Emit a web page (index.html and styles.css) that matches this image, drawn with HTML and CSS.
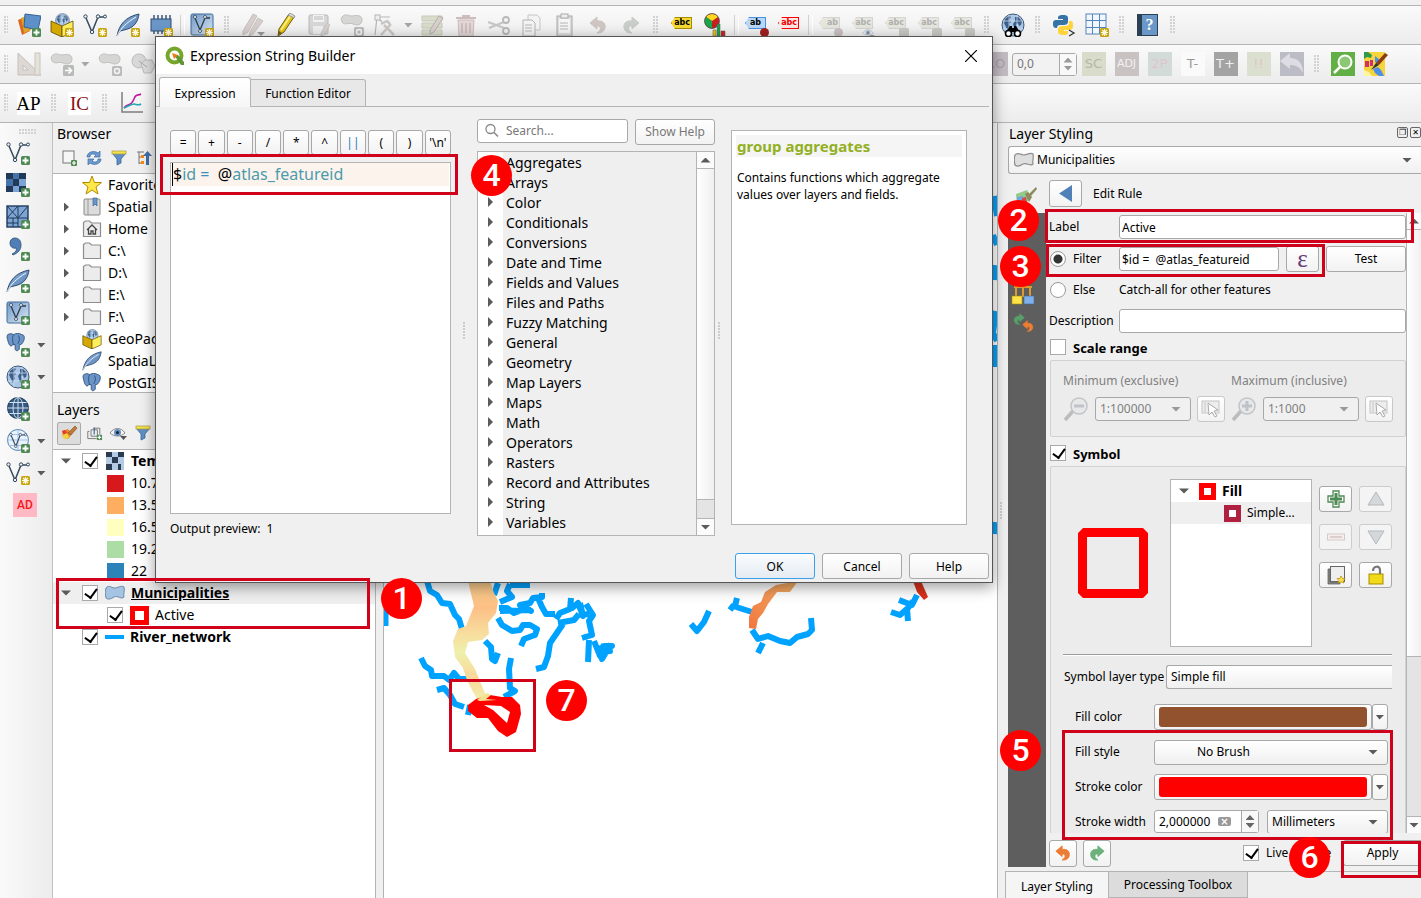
FILE: index.html
```html
<!DOCTYPE html>
<html lang="en">
<head>
<meta charset="utf-8">
<title>Expression String Builder</title>
<link rel="stylesheet" href="styles.css">
</head>
<body>
<svg class="defs" aria-hidden="true">
  <defs>
    <linearGradient id="gb" x1="0" y1="0" x2="1" y2="1"><stop offset="0" stop-color="#8fb1d8"/><stop offset="1" stop-color="#4f7db5"/></linearGradient>
    <linearGradient id="gv" x1="0" y1="0" x2="1" y2="1"><stop offset="0" stop-color="#6f97c6"/><stop offset="1" stop-color="#dce8f5"/></linearGradient>
    <linearGradient id="gt" x1="0" y1="0" x2="0" y2="1"><stop offset="0" stop-color="#fbd08d"/><stop offset=".22" stop-color="#fdbf85"/><stop offset=".45" stop-color="#f7dfa0"/><stop offset=".6" stop-color="#eef0ab"/><stop offset=".8" stop-color="#fbd79a"/><stop offset="1" stop-color="#f1efae"/></linearGradient>
    <linearGradient id="go" x1="1" y1="0" x2="0" y2="1"><stop offset="0" stop-color="#f3b068"/><stop offset="1" stop-color="#f0763f"/></linearGradient>
  </defs>
  <symbol id="plus" viewBox="0 0 9 9"><rect width="9" height="9" rx="1.5" fill="#4f8a55"/><path d="M4.500 1.500v6M1.500 4.500h6" stroke="#fff" stroke-width="1.800"/></symbol>
  <symbol id="star" viewBox="0 0 9 9"><rect width="9" height="9" rx="1.500" fill="#c9a412"/><path d="M4.500 1v7M1 4.500h7M2 2l5 5M7 2l-5 5" stroke="#fffbe0" stroke-width="1.200"/></symbol>
  <symbol id="vec" viewBox="0 0 24 24"><path d="M3 5L9 19L15 4H22" fill="none" stroke="#34495e" stroke-width="1.500"/><g fill="#eef2f6" stroke="#34495e"><circle cx="2.500" cy="3.500" r="1.700"/><circle cx="15" cy="3.500" r="1.700"/><circle cx="22" cy="3.500" r="1.500"/><circle cx="9" cy="19" r="1.700"/></g></symbol>
  <symbol id="vecp" viewBox="0 0 24 24"><use href="#vec"/><use href="#plus" x="15" y="15" width="9" height="9"/></symbol>
  <symbol id="vecs" viewBox="0 0 24 24"><use href="#vec"/><use href="#star" x="15" y="15" width="9" height="9"/></symbol>
  <symbol id="feather" viewBox="0 0 24 24"><path d="M1 23C3 12 9 4 23 1C22 8 19 15 8 17L4 18Z" fill="url(#gb)" stroke="#2f4d70"/><path d="M1 23C5 15 10 10 20 4" fill="none" stroke="#fff" stroke-width=".9"/></symbol>
  <symbol id="feathers" viewBox="0 0 24 24"><use href="#feather"/><use href="#star" x="15" y="15" width="9" height="9"/></symbol>
  <symbol id="featherp" viewBox="0 0 24 24"><use href="#feather"/><use href="#plus" x="15" y="15" width="9" height="9"/></symbol>
  <symbol id="dsm" viewBox="0 0 24 24"><path d="M1 7L10 3L13 18L5 22Z" fill="#e0641c"/><path d="M4 5L13 2L14 17L7 20Z" fill="#d9a62c"/><path d="M8 1L24 3L21 17L7 14Z" fill="#5d8fc9" stroke="#365f90"/><use href="#plus" x="15" y="15" width="9" height="9"/></symbol>
  <symbol id="globe" viewBox="0 0 24 24"><circle cx="12" cy="12" r="11" fill="#a9c6e6" stroke="#3e5876"/><path d="M4 6L8 3L10 4L8 7L10 9L8 11L9 13L7 18L5 14L3 10ZM14 4L17 4L21 8L20 12L18 13L17 10L15 12L16 14L14 18L13 14L12 11L14 8Z" fill="#3d5f88"/><path d="M2 8H22M2 16H22M8 2V22M16 2V22" stroke="#d4e3f3" stroke-width=".7"/></symbol>
  <symbol id="gpkg" viewBox="0 0 24 24"><use href="#globe" x="5" y="0" width="15" height="15"/><path d="M1 8L12 13V24L1 19Z" fill="#d4a800" stroke="#5a4a00" stroke-width=".8"/><path d="M12 13L23 8V19L12 24Z" fill="#ffee5c" stroke="#5a4a00" stroke-width=".8"/></symbol>
  <symbol id="gpkgs" viewBox="0 0 24 24"><use href="#gpkg"/><use href="#star" x="15" y="15" width="9" height="9"/></symbol>
  <symbol id="chip" viewBox="0 0 24 24"><path d="M5 2V7M9 2V7M13 2V7M17 2V7M21 2V7M5 17V21M9 17V21M13 17V21" stroke="#2f4d70" stroke-width="1.400"/><rect x="2" y="6" width="20" height="12" fill="#6a96c8" stroke="#2f4d70"/><use href="#star" x="15" y="15" width="9" height="9"/></symbol>
  <symbol id="vbox" viewBox="0 0 24 24"><rect x="1" y="1" width="22" height="21" rx="1.500" fill="url(#gv)" stroke="#3f6a9a"/><path d="M5 5L10 17L15 5H20" fill="none" stroke="#2c3e50" stroke-width="1.300"/><g fill="#fff" stroke="#2c3e50" stroke-width=".8"><circle cx="5" cy="4" r="1.500"/><circle cx="15" cy="4" r="1.500"/><circle cx="10" cy="18" r="1.500"/></g></symbol>
  <symbol id="vboxs" viewBox="0 0 24 24"><use href="#vbox"/><use href="#star" x="15" y="15" width="9" height="9"/></symbol>
  <symbol id="vboxp" viewBox="0 0 24 24"><use href="#vbox"/><use href="#plus" x="15" y="15" width="9" height="9"/></symbol>
  <symbol id="pencil" viewBox="0 0 24 24"><path d="M5 16L15 1L20 4L10 19L4 23Z" fill="#e8c81c" stroke="#6b5a14"/><path d="M7 17L17 2" stroke="#fff38c" stroke-width="1.500"/><path d="M14 2L16 0L21 3L20 5Z" fill="#ddd" stroke="#777" stroke-width=".7"/><path d="M4 23L5 18L8 20Z" fill="#7a5b1e"/></symbol>
  <symbol id="pencilg" viewBox="0 0 24 24"><path d="M2 18L12 1L16 3L7 19L2 22ZM9 19L17 5L22 8L12 21L8 23Z" fill="#d6cecc" stroke="#c6bfbd"/><path d="M16 19H24L20 23Z" fill="#999"/></symbol>
  <symbol id="save" viewBox="0 0 24 24"><rect x="2" y="2" width="19" height="19" rx="1.500" fill="#d6d6d6" stroke="#b8b8b8"/><rect x="6" y="2" width="11" height="7" fill="#f2f2f2"/><path d="M7 4H16M7 6H16" stroke="#bbb"/><rect x="6" y="13" width="10" height="8" fill="#eee"/><path d="M14 20L20 10L23 12L17 22L14 23Z" fill="#d9d0cc" stroke="#bbb" stroke-width=".6"/></symbol>
  <symbol id="blob" viewBox="0 0 24 24"><path d="M2 4C5 0 9 3 12 3C17 2 22 2 22 7C22 12 17 13 13 11C9 9 5 13 2 9C1 7 1 5 2 4Z" fill="#d6d7d5" stroke="#c0c1bf"/></symbol>
  <symbol id="blobs" viewBox="0 0 24 24"><use href="#blob"/><rect x="14" y="14" width="10" height="10" rx="1.500" fill="#bbb"/><circle cx="19" cy="19" r="2.500" fill="none" stroke="#f5f5f5" stroke-width="1.500"/></symbol>
  <symbol id="bloba" viewBox="0 0 24 24"><use href="#blob"/><rect x="13" y="13" width="11" height="11" rx="1.500" fill="#b8bbb8"/><path d="M15 18.500H21M18.500 15.500L21.500 18.500L18.500 21.500" fill="none" stroke="#fff" stroke-width="1.600"/></symbol>
  <symbol id="nodes" viewBox="0 0 24 24"><path d="M2 22L4 4H17M5 5L9 9" fill="none" stroke="#b5b5b5" stroke-width="1.200"/><rect x="2" y="2" width="5" height="5" fill="#eee" stroke="#b5b5b5"/><path d="M8 22L18 11M11 12L21 22M8 11L14 8L17 11" fill="none" stroke="#c9c6c4" stroke-width="2.500"/></symbol>
  <symbol id="table" viewBox="0 0 24 24"><path d="M1 3H21V8H1ZM1 10H21V15H1ZM1 17H21V22H1Z" fill="#d9dccb" stroke="#c6c9b6"/><path d="M9 17L18 3L22 5L13 19L9 21Z" fill="#d8d0cc" stroke="#b5aeaa"/></symbol>
  <symbol id="trash" viewBox="0 0 24 24"><path d="M4 7H20L19 23H5Z" fill="#e2d6d6" stroke="#ccbcbc"/><path d="M2 5H22M8 3H16M8 10V20M12 10V20M16 10V20" stroke="#ccbcbc" stroke-width="1.800"/></symbol>
  <symbol id="cut" viewBox="0 0 24 24"><path d="M1 9L17 15M2 15L17 9" stroke="#c6c6c6" stroke-width="2"/><g fill="none" stroke="#b8b8b8" stroke-width="1.800"><circle cx="19" cy="7" r="3"/><circle cx="19" cy="18" r="3"/></g></symbol>
  <symbol id="copy" viewBox="0 0 24 24"><path d="M8 2H17L20 5V17H8Z" fill="#f3f3f3" stroke="#c6c6c6"/><path d="M3 7H12L15 10V23H3Z" fill="#f3f3f3" stroke="#b2b2b2"/><path d="M5 12H12M5 15H12M5 18H12" stroke="#b5b5b5"/></symbol>
  <symbol id="paste" viewBox="0 0 24 24"><rect x="4" y="3" width="15" height="20" fill="#ddd" stroke="#aaa"/><rect x="6" y="6" width="11" height="14" fill="#f5f5f5"/><rect x="8" y="1" width="7" height="4" fill="#eee" stroke="#aaa"/><path d="M7 10H15M7 13H15M7 16H15" stroke="#b5b5b5"/></symbol>
  <symbol id="undo" viewBox="0 0 18 18"><path d="M1 7L8 1V5C14 4 17 8 16 12C15 16 12 17 8 17C11 15 12 13 11 11C10 10 9 10 8 10V13Z" fill="currentColor" stroke="currentColor" stroke-linejoin="round"/></symbol>
  <symbol id="rot" viewBox="0 0 24 24"><path d="M0 9L10 1V6C18 6 23 11 23 21C20 15 16 13 10 13V17Z" fill="currentColor"/></symbol>
  <symbol id="pie" viewBox="0 0 24 24"><circle cx="9" cy="8" r="7.500" fill="#c81e1e"/><path d="M9 8L3 4A7.500 7.500 0 0 1 15 4Z" fill="#ffd91c"/><path d="M9 8L3 4A7.500 7.500 0 0 0 9 15.500Z" fill="#18a64a"/><circle cx="9" cy="8" r="7.500" fill="none" stroke="#555" stroke-width=".8"/><path d="M10 23V17H13V23Z" fill="#f5c211" stroke="#555" stroke-width=".5"/><path d="M14 23V11H17V23Z" fill="#18a64a" stroke="#555" stroke-width=".5"/><path d="M18 23V18H22V23Z" fill="#c22" stroke="#555" stroke-width=".5"/></symbol>
  <symbol id="binoc" viewBox="0 0 24 24"><use href="#globe"/><path d="M5 19L9 13H11V15H13V13H15L19 19Z" fill="#000"/><circle cx="7.500" cy="20.500" r="3" fill="#fff" stroke="#000" stroke-width="1.600"/><circle cx="16.500" cy="20.500" r="3" fill="#fff" stroke="#000" stroke-width="1.600"/></symbol>
  <symbol id="python" viewBox="0 0 24 24"><path d="M6 5C6 2 9 2 11 2C15 2 16 3 16 5V9C16 11 14 12 12 12H8C6 12 5 13 5 15H4C1 15 1 12 1 10C1 8 2 7 4 7H11V6H6Z" fill="#3674a6"/><path d="M17 8H19C21 8 21 11 21 13C21 16 19 17 17 17H12V18H16V20C16 22 13 22 11 22C8 22 6 21 6 19V16C6 14 8 13 10 13H14C16 13 17 11 17 10Z" fill="#ffd43b"/><path d="M17 17L22 20L17 23" fill="none" stroke="#333" stroke-width="1.300"/></symbol>
  <symbol id="gridic" viewBox="0 0 24 24"><rect x="1" y="1" width="20" height="20" fill="#f1f7ff" stroke="#5684b8"/><path d="M1 7.500H21M1 14.500H21M7.500 1V21M14.500 1V21" stroke="#5684b8"/><use href="#star" x="15" y="15" width="9" height="9"/></symbol>
  <symbol id="ruler" viewBox="0 0 24 24"><path d="M1 1V23H24ZM6 13V18H11Z" fill="#ddd8d4" fill-rule="evenodd" stroke="#c4bfbb"/><rect x="18" y="1" width="5" height="22" fill="#e5e2da" stroke="#c8c5bd"/></symbol>
  <symbol id="twoblob" viewBox="0 0 24 24"><circle cx="8" cy="9" r="7" fill="#d8d8d8" stroke="#bbb"/><path d="M10 12L14 8H21L24 14L20 21H13Z" fill="#ddd" stroke="#bbb"/><path d="M8 9L16 15" stroke="#aaa"/></symbol>
  <symbol id="chart" viewBox="0 0 24 24"><path d="M3 1V21H24" fill="none" stroke="#7d7d7d" stroke-width="1.500"/><path d="M5 17C9 11 11 17 15 8C17 2 19 5 22 3" fill="none" stroke="#c0189a" stroke-width="1.600"/><path d="M5 17C10 15 12 13 15 13C17 13 19 15 22 13" fill="none" stroke="#23a5b5" stroke-width="1.600"/></symbol>
  <symbol id="search" viewBox="0 0 16 16"><circle cx="6.500" cy="6" r="4.500" fill="none" stroke="currentColor" stroke-width="1.300"/><path d="M10 9.500L14 13.500" stroke="currentColor" stroke-width="1.600"/></symbol>
  <symbol id="checker" viewBox="0 0 24 24"><rect width="20" height="19" fill="#7ba3d4"/><path d="M0 0H7V6H0ZM13 0H20V6H13ZM7 6H13V13H7ZM0 13H7V19H0ZM13 13H20V19H13Z" fill="#22395a"/><path d="M7 0H13V6H7ZM0 6H7V13H0Z" fill="#4774a8"/><use href="#plus" x="15" y="15" width="9" height="9"/></symbol>
  <symbol id="checker2" viewBox="0 0 20 20"><rect x="1" y="1" width="18" height="18" fill="#b4cbe6"/><path d="M1 1H7V6H1ZM13 1H19V6H13ZM7 6H13V12H7ZM1 13H7V19H1ZM13 13H16V19H13Z" fill="#2b3c52"/></symbol>
  <symbol id="mesh" viewBox="0 0 24 24"><rect x="1" y="1" width="21" height="21" fill="#7da4d3" stroke="#1f3a5a" stroke-width="1.400"/><path d="M1 13H22M12 1V22M1 1L12 13M12 1L1 13M22 1L12 13M7 13V22M1 18H12" stroke="#1f3a5a" fill="none"/><use href="#plus" x="15" y="15" width="9" height="9"/></symbol>
  <symbol id="comma" viewBox="0 0 24 24"><path d="M6 17C10 15 11 13 10 11C6 12 4 9 4 6C4 3 6 1 9 1C13 1 15 4 15 8C15 13 12 16 7 18Z" fill="#4f7fb6" stroke="#2f4d70" stroke-width=".8"/><use href="#plus" x="15" y="15" width="9" height="9"/></symbol>
  <symbol id="pg" viewBox="0 0 24 24"><path d="M2 2C5 0 8 1 9 2C12 0 16 0 19 2C23 2 23 8 19 13L17 14C16 12 16 16 16 19C15 22 11 22 11 19V14L8 14C6 18 3 14 2 8C1 5 1 4 2 2Z" fill="#6b95c8" stroke="#2b4a70"/><path d="M9 2C7 6 8 10 9 14M15 3C17 7 16 10 14 13" fill="none" stroke="#2b4a70"/></symbol>
  <symbol id="pgp" viewBox="0 0 24 24"><use href="#pg" width="20" height="20"/><use href="#plus" x="15" y="15" width="9" height="9"/></symbol>
  <symbol id="globep" viewBox="0 0 24 24"><use href="#globe"/><use href="#plus" x="15" y="15" width="9" height="9"/></symbol>
  <symbol id="globed" viewBox="0 0 24 24"><circle cx="12" cy="11" r="10.500" fill="#35597f" stroke="#22395a"/><path d="M1.500 11H22.500M3.500 5.500H20.500M3.500 16.500H20.500M12 .5V21.500" stroke="#cfe0f3" fill="none"/><ellipse cx="12" cy="11" rx="5" ry="10.500" fill="none" stroke="#cfe0f3"/><use href="#plus" x="15" y="15" width="9" height="9"/></symbol>
  <symbol id="globel" viewBox="0 0 24 24"><circle cx="12" cy="11" r="10.500" fill="#eaf3fd" stroke="#5684b8"/><path d="M1.500 11H22.500M3.500 5.500H20.500M3.500 16.500H20.500M12 .5V21.500" stroke="#a5c3e6" fill="none"/><use href="#vec" x="3" y="3" width="18" height="18"/><use href="#plus" x="15" y="15" width="9" height="9"/></symbol>
  <symbol id="addsel" viewBox="0 0 16 16"><rect x="2" y="1" width="11" height="12" fill="#f6f6f6" stroke="#777"/><use href="#plus" x="10" y="10" width="6" height="6"/></symbol>
  <symbol id="refresh" viewBox="0 0 16 16"><path d="M1 7C1 2 8 0 12 3L14 1V7H8L10 5C7 3 4 4 4 7Z" fill="#6b99d0" stroke="#3d6ba0" stroke-width=".7"/><path d="M15 9C15 14 8 16 4 13L2 15V9H8L6 11C9 13 12 12 12 9Z" fill="#6b99d0" stroke="#3d6ba0" stroke-width=".7"/></symbol>
  <symbol id="filter" viewBox="0 0 16 16"><path d="M1 3L6 9V15L10 13V9L15 3Z" fill="#5f8fc6" stroke="#3c6797" stroke-width=".8"/><rect x="1" y="1" width="14" height="3" fill="#f4e04d" stroke="#a89a3c" stroke-width=".7"/></symbol>
  <symbol id="collapse" viewBox="0 0 16 16"><path d="M1 2H8M3 2V14M3 7H6M3 13H6" stroke="#777" fill="none"/><rect x="5" y="5" width="3" height="3" fill="#f80"/><rect x="5" y="11" width="3" height="3" fill="#f80"/><path d="M10 15V6H7L11.500 1L16 6H13V15Z" fill="#3f6fa8"/></symbol>
  <symbol id="fav" viewBox="0 0 20 20"><path d="M10 1L12.500 7.500H19.500L14 12L16 19L10 15L4 19L6 12L.5 7.500H7.500Z" fill="#ffe74a" stroke="#b28c00"/></symbol>
  <symbol id="book" viewBox="0 0 20 20"><rect x="2" y="2" width="16" height="16" rx="1" fill="#dcdcdc" stroke="#888"/><path d="M6 2V18" stroke="#999"/><path d="M11 1H15V9L13 7L11 9Z" fill="#6b95c8" stroke="#3c6797" stroke-width=".7"/></symbol>
  <symbol id="folder" viewBox="0 0 20 20"><path d="M1.500 17.500V3.500L3.500 2H7.500L9.500 4H18.500V17.500Z" fill="#ececec" stroke="#8d8d8d" stroke-width="1.200"/></symbol>
  <symbol id="home" viewBox="0 0 20 20"><use href="#folder"/><path d="M5 11L10 6L15 11M6.500 10V15H9V12H11V15H13.500V10" fill="none" stroke="#444" stroke-width="1.300"/></symbol>
  <symbol id="brush" viewBox="0 0 20 20"><path d="M3 8L9 6L13 11L9 16L4 15Z" fill="#e8842c"/><path d="M3 8L6 7L9 11L5 12Z" fill="#e23b2e"/><path d="M4 12L8 10L10 14L8 16L4 15Z" fill="#f2d33a"/><path d="M9 10L16 3L18 5L12 12Z" fill="#c07a35" stroke="#7a4a1a" stroke-width=".6"/></symbol>
  <symbol id="brush2" viewBox="0 0 24 24"><path d="M2 9L13 5L17 13L12 18L3 20Z" fill="#94c98a"/><path d="M3 12L9 11L10 18L3 20Z" fill="#6fa8e0"/><path d="M8 13L12 12L13 18L8 19Z" fill="#d94848"/><path d="M11 9L14 7L18 12L15 17Z" fill="#8c8a5b"/><path d="M15 9L22 2L23 4L17 11Z" fill="#8c8a5b"/></symbol>
  <symbol id="group" viewBox="0 0 20 20"><path d="M3 8H1V17H12M5 6V14H13V6ZM8 4H16V12" fill="none" stroke="#777" stroke-width="1.200"/><path d="M9 3V12" stroke="#44699a" stroke-width="1.500"/><use href="#plus" x="12" y="12" width="7" height="7"/></symbol>
  <symbol id="eye" viewBox="0 0 20 20"><path d="M1 10C5 4 12 4 16 10C12 14 5 14 1 10Z" fill="#f5f5f5" stroke="#888"/><circle cx="8.500" cy="9.500" r="3.500" fill="#5f8fc6"/><circle cx="8.500" cy="9.500" r="1.500" fill="#222"/><path d="M11 13H18L14.500 17Z" fill="#555"/></symbol>
  <symbol id="poly" viewBox="0 0 20 16"><path d="M1 3C3 0 6 2 9 3C13 3 16 0 19 2C20 6 18 9 19 12C16 15 13 10 9 12C6 14 3 15 1 13C0 9 0 6 1 3Z" fill="currentColor" stroke="#6e87a3"/></symbol>
  <symbol id="polyg" viewBox="0 0 20 16"><path d="M1 3C3 0 6 2 9 3C13 3 16 0 19 2C20 6 18 9 19 12C16 15 13 10 9 12C6 14 3 15 1 13C0 9 0 6 1 3Z" fill="#dedede" stroke="#8d8d8d" stroke-width="1.200"/></symbol>
  <symbol id="zoomo" viewBox="0 0 26 26"><path d="M2 24L10 15" stroke="#bcbcbc" stroke-width="3.500"/><circle cx="16" cy="10" r="8" fill="#e6e8ea" stroke="#c2c4c6" stroke-width="1.500"/><path d="M11 10H21" stroke="#bfc3c8" stroke-width="3"/></symbol>
  <symbol id="zoomi" viewBox="0 0 26 26"><use href="#zoomo"/><path d="M16 5V15" stroke="#bfc3c8" stroke-width="3"/></symbol>
  <symbol id="canvas" viewBox="0 0 20 20"><rect x="1" y="2" width="17" height="12" fill="#ededed" stroke="#c4c4c4"/><path d="M4 3V13" stroke="#c4c4c4"/><path d="M7 4L17 11L13 12L16 17L14 18L11 13L8 16Z" fill="#fff" stroke="#aaa"/></symbol>
  <symbol id="addg" viewBox="0 0 20 20"><path d="M7 2H13V7H18V13H13V18H7V13H2V7H7Z" fill="#fff" stroke="#4f8a55" stroke-width="1.300"/><path d="M10 4V16M4 10H16" stroke="#4f8a55" stroke-width="3"/></symbol>
  <symbol id="rem" viewBox="0 0 20 20"><rect x="1.500" y="7" width="17" height="6" fill="#f4eeee" stroke="#d9c8c8"/><path d="M4 10H16" stroke="#ddcdcd" stroke-width="2"/></symbol>
  <symbol id="up" viewBox="0 0 20 20"><path d="M10 3L18 16H2Z" fill="#d5d8db" stroke="#b5b8bb"/></symbol>
  <symbol id="down" viewBox="0 0 20 20"><path d="M10 17L2 4H18Z" fill="#d5d8db" stroke="#b5b8bb"/></symbol>
  <symbol id="dup" viewBox="0 0 20 20"><path d="M2 4H4V17H14V19H2Z" fill="#8a8a84" stroke="#555" stroke-width=".7"/><rect x="4.500" y="1.500" width="14" height="15" fill="#eee" stroke="#666"/><path d="M15 11L16.500 13.500H19L17 15.500L18 18L15 17L12 18L13 15.500L11 13.500H14Z" fill="#ffe24a" stroke="#b28c00" stroke-width=".7"/></symbol>
  <symbol id="lock" viewBox="0 0 20 20"><path d="M7 6C7 1 14 0 14 5V9" fill="none" stroke="#777" stroke-width="2.200"/><rect x="3" y="9" width="14" height="10" fill="#f2da18" stroke="#a38f00"/></symbol>
  <symbol id="flow" viewBox="0 0 24 24"><path d="M5 14V4H12V14M12 4H19V14M3 4H21" fill="none" stroke="#e09a2c" stroke-width="2"/><rect x="1" y="13" width="10" height="8" fill="#ffe24a" stroke="#a38f00" stroke-width=".6"/><rect x="13" y="13" width="10" height="8" fill="#7fb0ea" stroke="#44699a" stroke-width=".6"/></symbol>
  <symbol id="qgis" viewBox="0 0 20 20"><circle cx="9.500" cy="9.500" r="7" fill="none" stroke="#76a52b" stroke-width="4"/><path d="M9 9L13 9L19 16V19H16Z" fill="#5d9632"/><path d="M7 7L13 9L9 13Z" fill="#ee7913"/></symbol>
  <symbol id="gsearch" viewBox="0 0 24 24"><rect width="24" height="24" fill="#62b045"/><circle cx="14" cy="10" r="6.500" fill="#8cc873" stroke="#fff" stroke-width="2"/><path d="M9 15L3 21" stroke="#fff" stroke-width="2.500"/></symbol>
  <symbol id="mapc" viewBox="0 0 24 24"><rect width="21" height="24" fill="#f7d33c"/><path d="M0 0H4L8 3L7 6L3 5L0 7Z" fill="#2f9a48"/><path d="M1 9H5V15H1ZM6 8H9V14H6Z" fill="#d32f6b"/><path d="M11 4L16 8L14 13L11 10ZM9 17L14 15L17 18L20 24H15L11 21Z" fill="#4a8fe8"/><path d="M0 18L5 20L8 24H0Z" fill="#fff7a0"/><path d="M12 11L21 1L24 3L15 13Z" fill="#8c3b14"/><path d="M7 18L12 11L15 13Z" fill="#333"/></symbol>
</svg>

<div class="topstrip"></div>
<div class="toolbar" role="toolbar" aria-label="Data source toolbar">
  <i class="grip first"></i>
  <span class="it"><svg class="i24"><use href="#dsm"/></svg></span>
  <span class="it"><svg class="i24"><use href="#gpkgs"/></svg></span>
  <span class="it"><svg class="i24"><use href="#vecs"/></svg></span>
  <span class="it"><svg class="i24"><use href="#feathers"/></svg></span>
  <span class="it"><svg class="i24"><use href="#chip"/></svg></span>
  <i class="vsep"></i>
  <span class="it"><svg class="i24"><use href="#vboxs"/></svg></span>
  <i class="grip"></i>
  <span class="it"><svg class="i24"><use href="#pencilg"/></svg></span>
  <span class="it"><svg class="i24"><use href="#pencil"/></svg></span>
  <span class="it"><svg class="i24"><use href="#save"/></svg></span>
  <span class="it"><svg class="i24"><use href="#blobs"/></svg></span>
  <span class="it"><svg class="i24"><use href="#nodes"/></svg></span>
  <span class="caret pale"></span>
  <span class="it"><svg class="i24"><use href="#table"/></svg></span>
  <span class="it"><svg class="i24"><use href="#trash"/></svg></span>
  <span class="it"><svg class="i24"><use href="#cut"/></svg></span>
  <span class="it"><svg class="i24"><use href="#copy"/></svg></span>
  <span class="it"><svg class="i24"><use href="#paste"/></svg></span>
  <span class="it faint"><svg class="i18"><use href="#undo"/></svg></span>
  <span class="it faint2"><svg class="i18 flip"><use href="#undo"/></svg></span>
  <i class="grip"></i>
  <span class="it"><b class="tag yellow">abc</b></span>
  <span class="it"><svg class="i24"><use href="#pie"/></svg></span>
  <i class="vsep"></i>
  <span class="it"><b class="tag blue">ab</b><i class="pin"></i></span>
  <span class="it"><b class="tag red">abc</b></span>
  <i class="vsep"></i>
  <span class="it off"><b class="tag gray">ab</b><i class="pin"></i></span>
  <span class="it off"><b class="tag gray">abc</b><svg class="sub"><use href="#eye"/></svg></span>
  <span class="it off"><b class="tag gray">abc</b><i class="sq"></i></span>
  <span class="it off"><b class="tag gray">abc</b><i class="sq"></i></span>
  <span class="it off"><b class="tag gray">abc</b><i class="sq"></i></span>
  <i class="grip"></i>
  <span class="it"><svg class="i24"><use href="#binoc"/></svg></span>
  <i class="grip"></i>
  <span class="it"><svg class="i24"><use href="#python"/></svg></span>
  <span class="it"><svg class="i24"><use href="#gridic"/></svg></span>
  <i class="grip"></i>
  <span class="it"><b class="help">?</b></span>
  <i class="grip"></i>
</div>
<div class="toolbar" role="toolbar" aria-label="Advanced digitizing toolbar">
  <i class="grip first"></i>
  <span class="it"><svg class="i24"><use href="#ruler"/></svg></span>
  <span class="it"><svg class="i24"><use href="#bloba"/></svg></span>
  <span class="caret pale"></span>
  <span class="it"><svg class="i24"><use href="#blobs"/></svg></span>
  <span class="it"><svg class="i24"><use href="#twoblob"/></svg></span>
  <span class="covered"></span>
  <span class="it"><b class="txt ro">RO</b></span>
  <span class="spin dis"><input type="text" value="0,0" aria-label="Rotation"><span class="steps"><i class="u"></i><i class="d"></i></span></span>
  <span class="it"><b class="txt sc">SC</b></span>
  <span class="it"><b class="txt adj">ADJ</b></span>
  <span class="it"><b class="txt p2">2P</b></span>
  <span class="it"><b class="txt tm">T-</b></span>
  <span class="it"><b class="txt tp">T+</b></span>
  <span class="it"><b class="txt ex">!!</b></span>
  <span class="it"><b class="txt back"><svg class="i24"><use href="#rot"/></svg></b></span>
  <i class="grip"></i>
  <span class="it"><svg class="i24"><use href="#gsearch"/></svg></span>
  <span class="it"><svg class="i24"><use href="#mapc"/></svg></span>
</div>
<div class="toolbar" role="toolbar" aria-label="Plugins toolbar">
  <i class="grip first"></i>
  <span class="it"><b class="serif">AP</b></span>
  <i class="grip"></i>
  <span class="it"><b class="serif ic">IC</b></span>
  <i class="grip"></i>
  <span class="it"><svg class="i24"><use href="#chart"/></svg></span>
</div>

<main class="main">
  <nav class="side" aria-label="Manage layers">
    <i class="hgrip"></i>
    <span class="si"><svg class="i24"><use href="#vecp"/></svg></span>
    <span class="si"><svg class="i24"><use href="#checker"/></svg></span>
    <span class="si"><svg class="i24"><use href="#mesh"/></svg></span>
    <span class="si"><svg class="i24"><use href="#comma"/></svg></span>
    <span class="si"><svg class="i24"><use href="#featherp"/></svg></span>
    <span class="si"><svg class="i24"><use href="#vboxp"/></svg></span>
    <span class="si"><svg class="i24"><use href="#pgp"/></svg><i class="caret"></i></span>
    <span class="si"><svg class="i24"><use href="#globep"/></svg><i class="caret"></i></span>
    <span class="si"><svg class="i24"><use href="#globed"/></svg></span>
    <span class="si"><svg class="i24"><use href="#globel"/></svg><i class="caret"></i></span>
    <span class="si"><svg class="i24"><use href="#vecs"/></svg><i class="caret"></i></span>
    <span class="si mid"><b class="ad">AD</b></span>
  </nav>

  <section class="docks">
    <h2 class="dtitle">Browser</h2>
    <div class="dtools"><svg class="i16"><use href="#addsel"/></svg><svg class="i16"><use href="#refresh"/></svg><svg class="i16"><use href="#filter"/></svg><svg class="i16"><use href="#collapse"/></svg></div>
    <ul class="tree browser">
      <li><i class="tw"></i><svg class="i20"><use href="#fav"/></svg>Favorites</li>
      <li><i class="tw r"></i><svg class="i20"><use href="#book"/></svg>Spatial</li>
      <li><i class="tw r"></i><svg class="i20"><use href="#home"/></svg>Home</li>
      <li><i class="tw r"></i><svg class="i20"><use href="#folder"/></svg>C:\</li>
      <li><i class="tw r"></i><svg class="i20"><use href="#folder"/></svg>D:\</li>
      <li><i class="tw r"></i><svg class="i20"><use href="#folder"/></svg>E:\</li>
      <li><i class="tw r"></i><svg class="i20"><use href="#folder"/></svg>F:\</li>
      <li><i class="tw"></i><svg class="i20"><use href="#gpkg"/></svg>GeoPac</li>
      <li><i class="tw"></i><svg class="i20"><use href="#feather"/></svg>SpatiaL</li>
      <li><i class="tw"></i><svg class="i20"><use href="#pg"/></svg>PostGIS</li>
    </ul>
    <h2 class="dtitle">Layers</h2>
    <div class="dtools lay"><span class="pressed"><svg class="i20"><use href="#brush"/></svg></span><svg class="i16"><use href="#group"/></svg><svg class="i20"><use href="#eye"/></svg><svg class="i16"><use href="#filter"/></svg></div>
    <ul class="tree layers">
      <li><i class="tw o"></i><input type="checkbox" class="cb" checked aria-label="Temperature layer"><svg class="i20"><use href="#checker2"/></svg><b>Tem</b></li>
      <li class="leg"><i class="sw c1"></i>10.7</li>
      <li class="leg"><i class="sw c2"></i>13.5</li>
      <li class="leg"><i class="sw c3"></i>16.5</li>
      <li class="leg"><i class="sw c4"></i>19.2</li>
      <li class="leg"><i class="sw c5"></i>22</li>
      <li class="cur"><i class="tw o"></i><input type="checkbox" class="cb" checked aria-label="Municipalities layer"><svg class="i20 polyc"><use href="#poly"/></svg><b class="ul">Municipalities</b></li>
      <li class="leg"><input type="checkbox" class="cb" checked aria-label="Active rule"><i class="ring"></i>Active</li>
      <li><i class="tw"></i><input type="checkbox" class="cb" checked aria-label="River network layer"><i class="line"></i><b>River_network</b></li>
    </ul>
  </section>

  <section class="map" aria-label="Map canvas">
    <svg class="mapsvg"><g transform="translate(-384 -122)">
      <g fill="none" stroke="#00a2ff" stroke-width="6" stroke-linejoin="round">
        <path d="M427 580L430 590L437 594L442 602L450 603L455 614L459 618L462 628"/>
        <path d="M498 582L494 594M510 583L507 590L512 596L500 601M510 584L530 584"/>
        <path d="M499 607L507 607L514 612L525 608L531 610L520 604L530 602L533 597L542 596V592M538 597L542 606L546 613L555 613M500 610L531 609"/>
        <path d="M498 617L502 624L512 630L520 629L523 624L530 624L537 628L535 634L524 638L521 645"/>
        <path d="M571 597L570 608L560 612L556 618M558 622L574 619L579 613M571 608L578 602L583 615L580 602M586 603L593 614L589 620L592 634L582 637M580 614L589 613"/>
        <path d="M563 623L550 642L548 655L544 666L536 668M589 639L588 661"/>
        <path d="M594 640L600 655L604 645L612 645L602 651L610 650L600 645M598 645L602 658L611 643"/>
        <path d="M485 640L491 646L492 658L495 660L498 652"/>
        <path d="M421 657L425 665L431 669L432 675L444 675L449 679L454 672L459 678L470 678"/>
        <path d="M437 689L444 687L450 694L455 703L464 706M470 704L468 714"/>
        <path d="M511 657L509 668L510 687L515 690L504 696"/>
        <path d="M384 605V625" stroke-width="9"/>
        <path d="M691 623L697 630L704 621L709 610M730 609L733 605L752 611M735 605L737 597M752 629L758 638L768 635L780 640L790 642L797 636L808 633L812 629L811 617M763 642L758 652"/>
        <path d="M899 599L912 604L917 594M891 611L900 614L908 607L913 600M907 608L908 620"/>
        <path d="M994 195L997 215M993 234L997 244M995 264L994 279M996 310L993 332L997 340M994 344V366M995 521L994 533"/>
      </g>
      <path d="M468 580H490L494 592L498 600L496 612L488 622L489 633L482 639L468 641L465 652L475 668L484 690L488 698L478 700L472 689L467 679L463 667L455 656L453 640L458 628L466 625L474 605Z" fill="url(#gt)"/>
      <path d="M798 580L790 591L777 591L768 603L763 612L758 618L756 628L749 627V616L753 605L761 601L765 591L776 584Z" fill="url(#go)"/>
      <path d="M913 580H921L928 596L924 599L917 591Z" fill="#d9321d"/>
      <path fill="#f00" fill-rule="evenodd" d="M468 704L476 698L490 694L502 696L512 696L520 704L521 713L516 731L507 736L498 730L488 717L477 717L468 710ZM484 704L493 709L507 722L510 711L501 705Z"/>
      <path d="M477 699L487 692L491 694L486 698L497 699L480 700Z" fill="#f3e28f"/>
    </g></svg>
  </section>
  <div class="split"><i class="vgrip"></i></div>

  <section class="style">
    <header class="shead"><h2 class="dtitle">Layer Styling</h2><span class="wbtns"><i class="wb">❐</i><i class="wb">✕</i></span></header>
    <span class="sel layer"><svg class="i20"><use href="#polyg"/></svg><select aria-label="Layer"><option>Municipalities</option></select></span>
    <div class="sbody">
      <aside class="strip"><span class="tab1"><svg class="i24"><use href="#brush2"/></svg></span><span class="dark"><svg class="i24"><use href="#flow"/></svg><span class="ur"><svg><use href="#undo"/></svg><svg><use href="#undo"/></svg></span></span></aside>
      <div class="panel">
        <div class="phead"><button class="btn backb" aria-label="Back"><i class="ltri"></i></button><span>Edit Rule</span></div>
        <div class="scroll">
          <div class="form">
            <div class="frow"><label for="lb">Label</label><input id="lb" class="field grow" value="Active"></div>
            <div class="frow"><label class="rad"><input type="radio" name="m" checked> Filter</label><input class="field filt" value="$id =  @atlas_featureid" aria-label="Filter"><button class="btn eps">ε</button><button class="btn grow">Test</button></div>
            <div class="frow"><label class="rad"><input type="radio" name="m"> Else</label><span>Catch-all for other features</span></div>
            <div class="frow last"><label for="ds">Description</label><input id="ds" class="field grow" value=""></div>
            <label class="gt"><input type="checkbox" class="cb"><b>Scale range</b></label>
            <div class="group scale">
              <div class="sc1"><span>Minimum (exclusive)</span><div class="srow"><svg class="i26"><use href="#zoomo"/></svg><span class="sel mini"><select disabled aria-label="Minimum"><option>1:100000</option></select></span><button class="btn cv" disabled aria-label="From canvas"><svg class="i20"><use href="#canvas"/></svg></button></div></div>
              <div class="sc1"><span>Maximum (inclusive)</span><div class="srow"><svg class="i26"><use href="#zoomi"/></svg><span class="sel mini"><select disabled aria-label="Maximum"><option>1:1000</option></select></span><button class="btn cv" disabled aria-label="From canvas"><svg class="i20"><use href="#canvas"/></svg></button></div></div>
            </div>
            <label class="gt"><input type="checkbox" class="cb" checked><b>Symbol</b></label>
            <div class="group sym">
              <div class="symtop">
                <div class="prev"><svg viewBox="0 0 70 70"><path d="M5 0H65L70 5V65L65 70H5L0 65V5ZM9 9V61H61V9Z" fill="#f00" fill-rule="evenodd"/></svg></div>
                <ul class="stree"><li><i class="tw o"></i><i class="ring s"></i><b>Fill</b></li><li class="sel2"><i class="ring s m"></i>Simple...</li></ul>
                <div class="sbtns">
                  <button class="btn" aria-label="Add"><svg class="i20"><use href="#addg"/></svg></button><button class="btn lt" aria-label="Up"><svg class="i20"><use href="#up"/></svg></button>
                  <button class="btn lt" aria-label="Remove"><svg class="i20"><use href="#rem"/></svg></button><button class="btn lt" aria-label="Down"><svg class="i20"><use href="#down"/></svg></button>
                  <button class="btn" aria-label="Duplicate"><svg class="i20"><use href="#dup"/></svg></button><button class="btn" aria-label="Lock"><svg class="i20"><use href="#lock"/></svg></button>
                </div>
              </div>
              <hr>
              <div class="typ"><label for="ty">Symbol layer type</label><span class="sel nocar"><select id="ty"><option>Simple fill</option></select></span></div>
              <div class="props">
                <span>Fill color</span><div class="colr"><button class="btn colb" aria-label="Fill color"><i class="brown"></i></button><button class="btn cdrop" aria-label="Fill color menu"><i class="caret"></i></button></div>
                <label for="fs">Fill style</label><span class="sel brushsel"><select id="fs"><option>No Brush</option></select></span>
                <span>Stroke color</span><div class="colr"><button class="btn colb" aria-label="Stroke color"><i class="redc"></i></button><button class="btn cdrop" aria-label="Stroke color menu"><i class="caret"></i></button></div>
                <label for="sw">Stroke width</label><div class="wrow"><span class="spin"><input id="sw" type="text" value="2,000000"><i class="clr">×</i><span class="steps"><i class="u"></i><i class="d"></i></span></span><span class="sel unit"><select aria-label="Unit"><option>Millimeters</option></select></span></div>
              </div>
            </div>
          </div>
          <div class="sbar"><span class="sb up"><i></i></span><span class="hdl"></span><span class="trk"></span><span class="sb dn"><i></i></span></div>
        </div>
        <footer class="pfoot"><button class="btn ub o" aria-label="Undo"><svg class="i16"><use href="#undo"/></svg></button><button class="btn ub g" aria-label="Redo"><svg class="i16 flip"><use href="#undo"/></svg></button><label class="live"><input type="checkbox" class="cb" checked>Live update</label><button class="btn apply">Apply</button></footer>
      </div>
    </div>
    <div class="btabs"><button class="bt on">Layer Styling</button><button class="bt">Processing Toolbox</button></div>
  </section>
</main>

<section class="dialog" role="dialog" aria-label="Expression String Builder">
  <header class="dhead"><svg class="i20"><use href="#qgis"/></svg><h1>Expression String Builder</h1><button class="x" aria-label="Close"><svg viewBox="0 0 12 12"><path d="M0 0L12 12M12 0L0 12" stroke="#000" stroke-width="1.200"/></svg></button></header>
  <div class="tabs"><button class="tb on">Expression</button><button class="tb">Function Editor</button></div>
  <div class="dcols">
    <div class="left">
      <div class="ops"><button>=</button><button>+</button><button>-</button><button>/</button><button>*</button><button>^</button><button class="bars">||</button><button>(</button><button>)</button><button>'\n'</button></div>
      <div class="editor" role="textbox" aria-label="Expression" contenteditable="true" spellcheck="false"><div class="ln">$<span class="id">id</span> <span class="eq">=</span>  @<span class="id">atlas_featureid</span></div></div>
      <div class="outp">Output preview:&nbsp; 1</div>
    </div>
    <div class="hsplit"><i class="vgrip"></i></div>
    <div class="midc">
      <div class="srch"><label class="sbox"><svg class="i16"><use href="#search"/></svg><input type="search" placeholder="Search..." aria-label="Search"></label><button class="btn sh">Show Help</button></div>
      <div class="fl"><ul>
        <li>Aggregates</li><li>Arrays</li><li>Color</li><li>Conditionals</li><li>Conversions</li><li>Date and Time</li><li>Fields and Values</li><li>Files and Paths</li><li>Fuzzy Matching</li><li>General</li><li>Geometry</li><li>Map Layers</li><li>Maps</li><li>Math</li><li>Operators</li><li>Rasters</li><li>Record and Attributes</li><li>String</li><li>Variables</li>
      </ul><div class="sbar in"><span class="sb up"><i></i></span><span class="hdl"></span><span class="trk"></span><span class="sb dn"><i></i></span></div></div>
    </div>
    <div class="hsplit n"><i class="vgrip"></i></div>
    <article class="helpp"><h3>group aggregates</h3><p>Contains functions which aggregate values over layers and fields.</p></article>
  </div>
  <footer class="dfoot"><button class="btn ok">OK</button><button class="btn">Cancel</button><button class="btn">Help</button></footer>
</section>

<div class="notes">
  <i class="box b1"></i><b class="num n1">1</b>
  <i class="box b2"></i><b class="num n2">2</b>
  <i class="box b3"></i><b class="num n3">3</b>
  <i class="box b4"></i><b class="num n4">4</b>
  <i class="box b5"></i><b class="num n5">5</b>
  <i class="box b6"></i><b class="num n6">6</b>
  <i class="box b7"></i><b class="num n7">7</b>
</div>
</body>
</html>
```
FILE: styles.css
```css
* { box-sizing: border-box; }
html, body { height: 100%; margin: 0; }
body { display: flex; flex-direction: column; background: #f0f0f0; color: #000; font: 12px/16px "Noto Sans", sans-serif; overflow: hidden; position: relative; }
button, input, select { font: inherit; color: inherit; margin: 0; }
ul, h1, h2, h3, p { margin: 0; padding: 0; list-style: none; font-weight: 400; }
i { font-style: normal; }
svg { display: block; flex: none; }
.defs { position: absolute; width: 0; height: 0; }
.i16 { width: 16px; height: 16px; }
.i18 { width: 18px; height: 18px; }
.i20 { width: 20px; height: 20px; }
.i24 { width: 24px; height: 24px; }
.i26 { width: 26px; height: 26px; }
.flip { transform: scaleX(-1); }

/* toolbars */
.topstrip { height: 5px; flex: none; }
.toolbar { flex: none; height: 39px; display: flex; align-items: center; border-top: 1px solid #b4b4b4; background: linear-gradient(#fafafa, #ececec); white-space: nowrap; }
.grip { flex: none; width: 18px; height: 18px; background: radial-gradient(circle at 1px 1px, #d2d2d2 1px, transparent 1px) 0 0 / 3px 3px; border: solid transparent; border-width: 0 6px; background-clip: padding-box; }
.grip.first { width: 12px; border-width: 0 4px; }
.vsep { flex: none; width: 8px; height: 20px; border-right: 1px solid #fff; border-left: 3px solid transparent; background: linear-gradient(90deg, #d0d0d0 1px, transparent 1px) padding-box; }
.it { flex: none; width: 33px; height: 26px; display: flex; align-items: center; justify-content: center; position: relative; }
.faint { color: #cfc6c4; } .faint2 { color: #c9cdc9; }
.caret { flex: none; width: 15px; height: 5px; background: #5a5a5a; clip-path: polygon(3px 0, 12px 0, 7px 5px); }
.pale { background: #a5a5a5; }
.tag { width: 21px; height: 12px; font: 700 8px/9px "DejaVu Sans", sans-serif; text-align: right; padding: 0 1px 0 0; border: 1px solid #a88c00; align-self: flex-start; margin-top: 5px; clip-path: polygon(0 50%, 4px 0, 100% 0, 100% 100%, 4px 100%); }
.yellow { background: #f7d932; } .blue { background: #b9d7f7; border-color: #4a90e2; padding-right: 4px; }
.red { background: #ffe5e5; border-color: #f00; color: #e00; } .gray { background: #dcdccc; border-color: #bbb; color: #777; }
.off { opacity: .55; }
.pin { position: absolute; right: 3px; bottom: 1px; width: 9px; height: 9px; border-radius: 50%; background: #a02020; }
.off .pin { background: #a99; }
.sub { position: absolute; right: 2px; bottom: -2px; width: 16px; height: 14px; }
.sq { position: absolute; right: 3px; bottom: 1px; width: 10px; height: 9px; background: #a5a89f; border-radius: 2px; }
.help { width: 21px; height: 22px; background: #6a96c8; border: 1px solid #2b3f55; border-left: 5px solid #2b3f55; color: #fff; text-align: center; font: 700 16px/20px "Liberation Serif", serif; }
.txt { width: 24px; height: 24px; font: 13px/24px "DejaVu Sans", sans-serif; text-align: center; overflow: hidden; }
.ro { background: #c3bcc3; color: #aaa0aa; } .sc { background: #d9dbcb; color: #b5b7a5; } .adj { background: #c9c2c2; color: #f4f0f0; font-size: 11px; }
.p2 { background: #d3dbd9; color: #dfc4cc; } .tm { background: #fafafa; color: #999; } .tp { background: #a3a3a3; color: #f0f0f0; } .ex { background: #dadfd0; color: #e0c5c5; } .back { background: #bcbcc6; color: #dcdce2; }
.covered { flex: none; width: 820px; }
.serif { width: 23px; height: 23px; background: #fff; font: 19px/23px "Liberation Serif", serif; display: flex; justify-content: center; }
.ic { color: #8b0f0f; }
.spin { flex: none; display: flex; align-items: center; border: 1px solid #a8a8a8; border-radius: 3px; background: #fff; height: 23px; width: 65px; }
.spin input { flex: 1; min-width: 0; border: 0; background: none; padding: 0 4px; }
.spin.dis { background: #f2f2f2; color: #777; }
.steps { flex: none; width: 17px; height: 100%; border-left: 1px solid #a8a8a8; display: flex; flex-direction: column; align-items: center; justify-content: center; gap: 3px; background: #f8f8f8; }
.steps i { width: 9px; height: 5px; background: #666; }
.dis .steps i { background: #999; }
.steps .u { clip-path: polygon(50% 0, 100% 100%, 0 100%); } .steps .d { clip-path: polygon(0 0, 100% 0, 50% 100%); }

/* main area */
.main { flex: 1; min-height: 0; display: flex; border-top: 1px solid #b4b4b4; }
.side { flex: none; width: 53px; border-right: 1px solid #c0c0c0; padding-left: 6px; background: linear-gradient(90deg, #fafafa, #ececec); }
.hgrip { display: block; height: 14px; margin-left: 13px; width: 17px; background: radial-gradient(circle at 1px 1px, #d2d2d2 1px, transparent 1px) 0 0 / 3px 3px; border: solid transparent; border-width: 6px 0 3px; background-clip: padding-box; }
.si { height: 32px; display: flex; align-items: center; gap: 4px; }
.mid { padding-left: 7px; }
.ad { width: 24px; height: 24px; background: #ffb9c5; color: #f01818; font: 500 12px/24px Roboto, sans-serif; text-align: center; }
.docks { flex: none; width: 323px; display: flex; flex-direction: column; border-right: 1px solid #b4b4b4; }
.dtitle { font-size: 14px; line-height: 21px; height: 22px; padding-left: 4px; }
.dtools { display: flex; align-items: center; height: 28px; gap: 9px; padding: 0 8px 3px; }
.dtools.lay { padding: 0 4px 4px; gap: 6px; }
.pressed { width: 24px; height: 23px; border: 1px solid #aaa; border-radius: 2px; background: #dcdcdc; display: flex; align-items: center; justify-content: center; }
.tree { background: #fff; border-top: 1px solid #b4b4b4; font-size: 14px; line-height: 22px; }
.browser { height: 220px; overflow: hidden; flex: none; border-bottom: 1px solid #b4b4b4; margin-bottom: 6px; }
.layers { flex: 1; }
.tree li { display: flex; align-items: center; height: 22px; padding-left: 8px; white-space: nowrap; }
.browser li svg { margin: 0 6px 0 11px; }
.tw { flex: none; width: 10px; height: 9px; }
.tw.r { background: #5a5a5a; clip-path: polygon(3px 0, 8px 50%, 3px 100%); }
.tw.o { background: #5a5a5a; clip-path: polygon(0 2px, 100% 2px, 50% 7px); }
.cb { appearance: none; flex: none; width: 16px; height: 16px; border: 1px solid #a9a9a9; background: #fff; position: relative; }
.cb:checked::before { content: ""; position: absolute; left: 4px; top: 0; width: 6px; height: 10px; border: solid #000; border-width: 0 2px 2px 0; transform: rotate(36deg); }
.layers .cb { margin: 0 7px 0 11px; }
.layers li svg { margin-right: 6px; }
.polyc { color: #a5c3e2; }
.layers .leg { padding-left: 54px; }
.sw { width: 17px; height: 17px; margin-right: 7px; }
.c1 { background: #d7191c; } .c2 { background: #fdae61; } .c3 { background: #ffffbf; } .c4 { background: #abdda4; } .c5 { background: #2b83ba; }
.layers .leg .cb { margin: 0 7px 0 0; }
.cur { background: #efefef; }
.ul { text-decoration: underline; }
.ring { flex: none; width: 19px; height: 19px; border: 5px solid #f00; background: #fff; margin-right: 6px; }
.line { width: 19px; height: 4px; background: #00a2ff; margin-right: 6px; }
.map { flex: 1; min-width: 0; margin-left: 7px; border: solid #b4b4b4; border-width: 0 1px; background: #fff; overflow: hidden; }
.mapsvg { width: 100%; height: 100%; overflow: hidden; }
.split { flex: none; width: 7px; display: flex; align-items: center; justify-content: center; }
.vgrip { width: 3px; height: 18px; background: radial-gradient(circle at 1px 1px, #ccc 1px, transparent 1px) 0 0 / 3px 3px; }

/* layer styling dock */
.style { flex: none; width: 416px; display: flex; flex-direction: column; padding-left: 3px; }
.shead { display: flex; justify-content: space-between; height: 23px; }
.shead .dtitle { padding-left: 1px; }
.wbtns { display: flex; gap: 2px; align-items: center; padding-bottom: 4px; }
.wb { width: 11px; height: 11px; border: 1px solid #666; border-radius: 2px; font: 8px/9px "DejaVu Sans", sans-serif; text-align: center; }
.sel { position: relative; display: flex; align-items: center; border: 1px solid #a8a8a8; border-radius: 3px; background: linear-gradient(#fff, #f0f0f0); min-width: 0; }
.sel select { appearance: none; border: 0; background: none; width: 100%; height: 100%; padding: 0 4px; opacity: 1; }
.sel::after { content: ""; position: absolute; right: 9px; width: 10px; height: 5px; background: #5a5a5a; clip-path: polygon(0 0, 100% 0, 50% 100%); pointer-events: none; }
.nocar::after { display: none; }
.layer { height: 28px; flex: none; padding-left: 5px; border-right: 0; border-radius: 3px 0 0 3px; }
.layer svg { height: 16px; }
.layer select { padding-left: 3px; }
.sbody { flex: 1; min-height: 0; display: flex; }
.strip { flex: none; width: 38px; display: flex; flex-direction: column; margin-bottom: 4px; }
.tab1 { height: 39px; padding: 11px 0 0 6px; }
.dark { flex: 1; background: #5e5e5e; padding: 70px 0 0 3px; display: flex; flex-direction: column; gap: 6px; }
.ur { display: flex; padding-left: 2px; }
.ur svg { width: 12px; height: 12px; color: #58a06a; transform: scaleX(-1); }
.ur svg + svg { color: #ef7d31; transform: none; margin: 7px 0 0 -3px; }
.panel { flex: 1; min-width: 0; display: flex; flex-direction: column; padding-left: 3px; }
.phead { flex: none; height: 39px; display: flex; align-items: center; gap: 11px; }
.btn { border: 1px solid #a8a8a8; border-radius: 3px; background: linear-gradient(#fff, #f2f2f2); padding: 0; display: flex; align-items: center; justify-content: center; height: 26px; }
.backb { width: 33px; height: 27px; }
.ltri { width: 13px; height: 17px; background: #4f80b8; clip-path: polygon(0 50%, 100% 0, 100% 100%); }
.scroll { flex: 1; min-height: 0; display: flex; overflow: hidden; }
.form { flex: 1; min-width: 0; padding-top: 1px; overflow: hidden; }
.frow { display: flex; align-items: center; height: 26px; margin-bottom: 6px; }
.frow.last { margin-bottom: 2px; }
.frow > label { flex: none; width: 70px; }
.frow:nth-child(3) { height: 24px; }
.field { height: 24px; min-width: 0; border: 1px solid #a8a8a8; border-radius: 3px; background: #fff; padding: 0 2px; }
.grow { flex: 1; }
.filt { width: 160px; white-space: pre; }
.eps { width: 33px; margin: 0 7px; color: #6b3a78; font: 25px/20px "Liberation Serif", serif; }
.rad { display: flex; align-items: center; gap: 7px; padding-left: 1px; }
.rad input { appearance: none; width: 16px; height: 16px; border-radius: 50%; border: 1px solid #999; background: #fff; }
.rad input:checked { background: radial-gradient(#333 4px, #fff 5px); }
.gt { display: flex; align-items: center; gap: 7px; height: 24px; font-size: 13px; padding-left: 1px; }
.gt .cb { margin-bottom: 2px; }
.group { border: 1px solid #d2d2d2; border-radius: 2px; background: #ececec; margin-left: 1px; }
.scale { height: 77px; display: flex; padding: 12px; color: #808080; margin-bottom: 5px; gap: 6px; }
.sc1 { flex: 1; }
.srow { display: flex; align-items: center; margin-top: 7px; gap: 6px; }
.mini { flex: 1; height: 24px; color: #808080; background: #f0f0f0; }
.mini::after { background: #999; }
.cv { width: 28px; border-color: #c8c8c8; }
.sym { padding: 12px 13px 0 12px; border-bottom: 0; }
.symtop { display: flex; gap: 7px; height: 168px; }
.prev { flex: 1; display: flex; align-items: center; justify-content: center; }
.prev svg { width: 70px; height: 70px; }
.stree { width: 142px; background: #fff; border: 1px solid #b4b4b4; }
.stree li { display: flex; align-items: center; height: 22px; padding-left: 8px; }
.stree li b { font-size: 14px; }
.stree .tw { margin-right: 10px; }
.stree .sel2 { background: #efefef; padding-left: 53px; }
.ring.s { width: 17px; height: 17px; }
.ring.m { border-color: #b02040; }
.sbtns { display: grid; grid-template-columns: 33px 33px; grid-auto-rows: 26px; gap: 12px 7px; padding-top: 7px; align-content: start; }
.lt { border-color: #ccc; background: #f4f4f4; }
hr { border: 0; border-top: 1px solid #9a9a9a; border-bottom: 1px solid #fff; margin: 7px 0 9px; }
.typ { display: flex; align-items: center; }
.typ label { flex: none; width: 103px; padding-left: 1px; white-space: nowrap; }
.typ .sel { flex: 1; height: 24px; border-right: 0; border-radius: 3px 0 0 3px; }
.props { display: grid; grid-template-columns: 79px 1fr; grid-auto-rows: 26px; row-gap: 9px; align-items: center; padding: 15px 4px 0 12px; }
.props > * { white-space: nowrap; }
.colr, .wrow { display: flex; }
.colb { flex: 1; padding: 2px 4px; }
.colb i { flex: 1; height: 20px; border-radius: 3px; }
.brown { background: #91522d; } .redc { background: #f00; }
.cdrop { width: 16px; }
.brushsel { height: 25px; }
.brushsel select { padding-left: 42px; }
.wrow { gap: 8px; }
.wrow .spin { width: 105px; }
.unit { flex: 1; height: 24px; }
.clr { width: 13px; height: 9px; margin-right: 10px; background: #999; color: #fff; font: 700 10px/9px "DejaVu Sans", sans-serif; text-align: center; border-radius: 2px; }
.sbar { flex: none; width: 15px; display: flex; flex-direction: column; border-left: 1px solid #b4b4b4; background: #f5f5f5; }
.sb { height: 17px; flex: none; display: flex; align-items: center; justify-content: center; border: solid #b4b4b4; background: #fbfbfb; }
.sb.up { border-width: 0 0 1px; } .sb.dn { border-width: 1px 0 0; }
.sb i { width: 10px; height: 5px; background: #5a5a5a; clip-path: polygon(0 0, 100% 0, 50% 100%); }
.sb.up i { clip-path: polygon(50% 0, 100% 100%, 0 100%); }
.hdl { flex: 67; background: linear-gradient(90deg, #fff, #f0f0f0); border-bottom: 1px solid #b4b4b4; }
.trk { flex: 25; background: #e4e4e4; }
.pfoot { flex: none; height: 38px; display: flex; align-items: center; padding-top: 2px; }
.ub { width: 28px; height: 27px; margin-right: 6px; }
.o { color: #ec7b33; } .g { color: #6cb07a; }
.live { margin-left: auto; display: flex; gap: 7px; align-items: center; width: 100px; white-space: nowrap; }
.apply { width: 78px; border-right: 0; border-radius: 3px 0 0 3px; }
.btabs { flex: none; height: 27px; border-top: 1px solid #b4b4b4; display: flex; align-items: flex-start; margin-left: -3px; }
.bt { border: 1px solid #b4b4b4; border-top: 0; border-radius: 0; background: #dcdcdc; height: 26px; padding: 0 13px; width: 140px; white-space: nowrap; }
.bt.on { background: #f5f5f5; height: 27px; border-bottom: 0; width: 103px; border-right: 0; padding: 2px 0 0; }

/* dialog window */
.dialog { position: absolute; left: 155px; top: 36px; width: 838px; height: 547px; display: flex; flex-direction: column; border: 1px solid #555; background: #f0f0f0; box-shadow: 0 4px 14px rgba(0,0,0,.4); }
.dhead { flex: none; display: flex; align-items: center; height: 37px; background: #fff; padding: 0 15px 0 9px; gap: 5px; }
.dhead h1 { flex: 1; font-size: 14px; line-height: 20px; }
.x { border: 0; background: none; padding: 0; width: 12px; height: 12px; }
.x svg { width: 12px; height: 12px; }
.tabs { flex: none; display: flex; align-items: flex-end; height: 33px; padding-left: 3px; box-shadow: inset 0 -1px #b4b4b4; margin-right: 3px; }
.tb { height: 28px; width: 115px; border: 1px solid #b4b4b4; border-left: 0; border-radius: 0 3px 0 0; background: #e8e8e8; padding: 2px 0 0; }
.tb.on { height: 30px; width: 92px; background: linear-gradient(#fff, #f6f6f6); border-left: 1px solid #b4b4b4; border-bottom: 0; border-radius: 3px 3px 0 0; }
.dcols { flex: 1; min-height: 0; display: grid; grid-template-columns: minmax(0, 281fr) 26px minmax(0, 238fr) 16px minmax(0, 236fr); padding: 0 25px 0 14px; }
.left { display: flex; flex-direction: column; padding-top: 23px; }
.ops { display: grid; grid-template-columns: repeat(10, 1fr); gap: 2px; height: 32px; }
.ops button { border: 1px solid #a8a8a8; border-radius: 3px; background: linear-gradient(#fff, #f2f2f2); height: 25px; padding: 0; }
.ops .bars { color: #2a7ab8; }
.editor { height: 352px; border: 1px solid #b4b4b4; background: #fff; font-size: 16px; line-height: 23px; outline: 0; }
.ln { background: #fdf3ed; border-left: 1px solid #000; margin: 0 1px; white-space: pre; }
.id { color: #4b9bab; } .eq { color: #3b8fc0; }
.outp { padding-top: 7px; }
.hsplit { display: flex; align-items: center; justify-content: center; padding-top: 2px; }
.hsplit.n { padding-right: 8px; }
.midc { display: flex; flex-direction: column; padding-top: 12px; }
.srch { display: flex; gap: 7px; height: 32px; align-items: flex-start; }
.sbox { flex: 1; min-width: 0; height: 24px; border: 1px solid #a8a8a8; border-radius: 3px; background: #fff; display: flex; align-items: center; padding-left: 6px; gap: 6px; color: #888; }
.sbox input { flex: 1; min-width: 0; border: 0; background: none; outline: 0; padding: 0; }
.sbox input::placeholder { color: #777; opacity: 1; }
.sh { flex: none; width: 80px; color: #777; }
.fl { height: 385px; border: 1px solid #b4b4b4; display: flex; background: #fff; }
.fl ul { flex: 1; font-size: 14px; line-height: 20px; }
.fl li { margin-left: 25px; padding: 1px 0 0 3px; background: #efefef; position: relative; height: 20px; line-height: 20px; white-space: nowrap; }
.fl li:last-child { height: 23px; }
.fl li::before { content: ""; position: absolute; left: -15px; top: 5px; width: 5px; height: 10px; background: #5a5a5a; clip-path: polygon(0 0, 100% 50%, 0 100%); }
.sbar.in { width: 18px; }
.in .hdl { flex: 18; } .in .trk { flex: 1; }
.helpp { height: 395px; margin-top: 23px; background: #fff; border: 1px solid #b4b4b4; padding: 4px; }
.helpp h3 { background: #f5f5f5; color: #93b023; font-size: 15px; line-height: 22px; font-weight: 700; padding-left: 1px; margin-bottom: 12px; }
.helpp p { line-height: 17px; padding-left: 1px; }
.dfoot { flex: none; display: flex; justify-content: flex-end; gap: 7px; padding: 0 3px 3px 0; }
.dfoot .btn { width: 80px; padding-top: 1px; }
.dfoot .ok { border-color: #3ba0ec; background: linear-gradient(#fafcfe, #e4ebf2); }

/* numbered call-outs */
.notes { pointer-events: none; }
.box { position: absolute; border: 3px solid #d0021b; }
.num { position: absolute; width: 41px; height: 41px; border-radius: 50%; background: #f00; color: #fff; font: 500 32px/41px Roboto, "Liberation Sans", sans-serif; text-align: center; }
.b1 { left: 56px; top: 578px; width: 314px; height: 51px; } .n1 { left: 381px; top: 578px; }
.b2 { right: 7px; top: 209px; width: 369px; height: 34px; } .n2 { right: 382px; top: 200px; }
.b3 { right: 96px; top: 244px; width: 279px; height: 33px; } .n3 { right: 380px; top: 246px; }
.b4 { left: 160px; top: 154px; width: 298px; height: 41px; } .n4 { left: 471px; top: 155px; }
.b5 { right: 28px; top: 730px; width: 331px; height: 110px; } .n5 { right: 380px; top: 730px; }
.b6 { right: 0; top: 841px; width: 80px; height: 37px; } .n6 { right: 91px; top: 837px; }
.b7 { left: 449px; top: 679px; width: 87px; height: 73px; } .n7 { left: 546px; top: 680px; }
```
